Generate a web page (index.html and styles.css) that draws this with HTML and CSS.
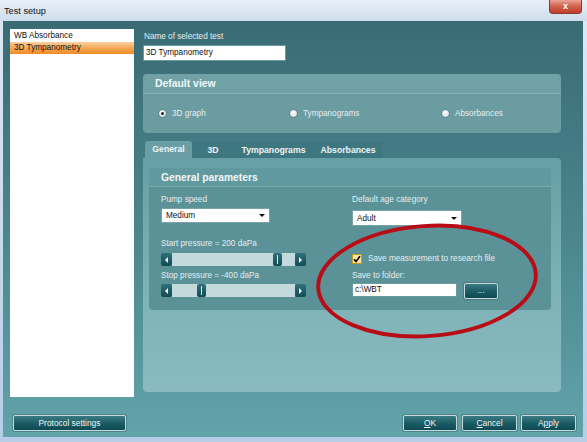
FILE: index.html
```html
<!DOCTYPE html>
<html>
<head>
<meta charset="utf-8">
<title>Test setup</title>
<link rel="stylesheet" href="styles.css">
</head>
<body>
<div class="window">
  <div class="titlebar">
    <span class="title">Test setup</span>
    <div class="close">x</div>
  </div>
  <div class="client">
    <div class="main">
      <div class="list">
        <div class="item">WB Absorbance</div>
        <div class="item selected">3D Tympanometry</div>
      </div>
      <div class="right">
        <div class="label name-label">Name of selected test</div>
        <div class="textbox name-box">3D Tympanometry</div>
        <div class="panel">
          <div class="panel-head">Default view</div>
          <div class="radios">
            <div class="radio-item"><span class="radio on"></span><span class="radio-text">3D graph</span></div>
            <div class="radio-item"><span class="radio"></span><span class="radio-text">Tympanograms</span></div>
            <div class="radio-item"><span class="radio"></span><span class="radio-text">Absorbances</span></div>
          </div>
        </div>
        <div class="tabs">
          <div class="tab active tab-general">General</div>
          <div class="tab-strip">
            <div class="tab tab-3d">3D</div>
            <div class="tab tab-tymp">Tympanograms</div>
            <div class="tab tab-abs">Absorbances</div>
          </div>
        </div>
        <div class="tabpanel">
          <div class="group">
            <div class="group-head">General parameters</div>
            <div class="group-body">
              <div class="col col-left">
                <div class="label lbl-pump">Pump speed</div>
                <div class="select sel-pump"><span>Medium</span><span class="caret"></span></div>
                <div class="label lbl-start">Start pressure = 200 daPa</div>
                <div class="slider sl-start">
                  <span class="sbtn"><span class="arr-l"></span></span>
                  <span class="track"><span class="thumb" style="left:101px"></span></span>
                  <span class="sbtn"><span class="arr-r"></span></span>
                </div>
                <div class="label lbl-stop">Stop pressure = -400 daPa</div>
                <div class="slider sl-stop">
                  <span class="sbtn"><span class="arr-l"></span></span>
                  <span class="track"><span class="thumb" style="left:25px"></span></span>
                  <span class="sbtn"><span class="arr-r"></span></span>
                </div>
              </div>
              <div class="col col-right">
                <div class="label lbl-age">Default age category</div>
                <div class="select sel-age"><span>Adult</span><span class="caret"></span></div>
                <div class="check-row">
                  <span class="checkbox">
                    <svg width="8" height="8" viewBox="0 0 8 8"><path d="M1 4.2 L3 6.4 L7 1.2" fill="none" stroke="#000" stroke-width="1.6"/></svg>
                  </span>
                  <span class="label">Save measurement to research file</span>
                </div>
                <div class="label lbl-folder">Save to folder:</div>
                <div class="folder-row">
                  <div class="textbox folder-box">c:\WBT</div>
                  <div class="btn btn-dots">...</div>
                </div>
              </div>
            </div>
          </div>
        </div>
      </div>
    </div>
    <div class="footer">
      <div class="btn btn-protocol">Protocol settings</div>
      <div class="footer-right">
        <div class="btn btn-ok"><u>O</u>K</div>
        <div class="btn btn-cancel"><u>C</u>ancel</div>
        <div class="btn btn-apply">A<u>p</u>ply</div>
      </div>
    </div>
  </div>
  <svg class="annotation" width="587" height="442" viewBox="0 0 587 442">
    <ellipse cx="427" cy="281" rx="109" ry="55" transform="rotate(-4 427 281)" fill="none" stroke="#b80d16" stroke-width="3.9"/>
  </svg>
</div>
</body>
</html>
```
FILE: styles.css
```css
html, body {
  margin: 0;
  padding: 0;
}
body {
  width: 587px;
  height: 442px;
  overflow: hidden;
  font-family: "Liberation Sans", Arial, sans-serif;
}
.window {
  position: relative;
  width: 587px;
  height: 442px;
  background: linear-gradient(#dfe9f5, #b6cce7);
}
.titlebar {
  height: 21px;
  display: flex;
  justify-content: space-between;
  align-items: flex-start;
  background: linear-gradient(#e9f0f8, #cfdced);
}
.title {
  font-size: 9.2px;
  line-height: 10px;
  margin: 6px 0 0 4px;
  color: #111;
}
.close {
  width: 33px;
  height: 14px;
  margin-right: 5px;
  box-sizing: border-box;
  background: linear-gradient(#eba596, #d26550 45%, #bf3e29);
  border: 1px solid #8a3b30;
  border-top: none;
  border-radius: 0 0 4px 4px;
  color: #fff;
  font-weight: bold;
  font-size: 9px;
  line-height: 12px;
  text-align: center;
}
.client {
  margin-left: 3px;
  width: 580px;
  height: 416px;
  box-sizing: border-box;
  padding: 8px 7px 0 7px;
  background: linear-gradient(#3a6b75, #4a858d 50%, #62a3aa);
}
.main {
  display: flex;
  gap: 9px;
  height: 368px;
}
.list {
  width: 124px;
  background: #fff;
  padding-top: 1px;
  box-sizing: border-box;
}
.item {
  font-size: 8.2px;
  line-height: 12px;
  height: 12px;
  padding-left: 4px;
  color: #111;
}
.item.selected {
  background: linear-gradient(#fbd0a0, #f6a452 55%, #f18b25);
}
.right {
  width: 418px;
  display: flex;
  flex-direction: column;
}
.label {
  font-size: 8.2px;
  line-height: 10px;
  color: #e4eef0;
  white-space: nowrap;
}
.name-label {
  margin-top: 3px;
  margin-left: 1px;
}
.textbox {
  background: #fff;
  box-sizing: border-box;
  border: 1px solid #6d9aa0;
  font-size: 8.2px;
  color: #111;
  padding-left: 2px;
}
.name-box {
  margin-top: 3px;
  width: 143px;
  height: 16px;
  line-height: 14px;
}
.panel {
  margin-top: 13px;
  height: 59px;
  border-radius: 4px;
  background: #6a9ca2;
  display: flex;
  flex-direction: column;
}
.panel-head {
  height: 20px;
  box-sizing: border-box;
  border-bottom: 1px solid #86b2b7;
  background: #6fa1a6;
  border-radius: 4px 4px 0 0;
  color: #f2f7f7;
  font-weight: bold;
  font-size: 10.4px;
  line-height: 20px;
  padding-left: 12px;
}
.radios {
  flex: 1;
  display: grid;
  grid-template-columns: 131px 152px auto;
  align-items: center;
  padding-left: 15px;
}
.radio-item {
  display: flex;
  align-items: center;
  gap: 5px;
}
.radio {
  width: 9px;
  height: 9px;
  box-sizing: border-box;
  border-radius: 50%;
  background: radial-gradient(circle at 40% 35%, #ffffff, #dfe6e8 70%, #b9c6ca);
  border: 1px solid #55868c;
  position: relative;
}
.radio.on::after {
  content: "";
  position: absolute;
  left: 2px;
  top: 2px;
  width: 3px;
  height: 3px;
  border-radius: 50%;
  background: #111;
}
.radio-text {
  font-size: 8.2px;
  color: #e6eff0;
}
.tabs {
  margin-top: 8px;
  height: 17px;
  display: flex;
  padding-left: 2px;
}
.tab {
  font-weight: bold;
  font-size: 8.7px;
  line-height: 17px;
  color: #eef5f5;
  text-align: center;
}
.tab.active {
  width: 47px;
  background: #6b9ea4;
  border-radius: 3px 3px 0 0;
}
.tab-strip {
  display: flex;
  background: #3e777f;
  height: 16px;
  margin-top: 1px;
}
.tab-strip .tab {
  line-height: 16px;
}
.tab-3d { width: 42px; }
.tab-tymp { width: 79px; }
.tab-abs { width: 70px; }
.tabpanel {
  height: 234px;
  box-sizing: border-box;
  background: linear-gradient(#669fa5, #7fb3b8 60%, #88babf);
  border-radius: 0 4px 4px 4px;
  padding: 10px 10px 0 6px;
}
.group {
  height: 142px;
  border-radius: 4px;
  background: #5b9298;
  display: flex;
  flex-direction: column;
}
.group-head {
  height: 19px;
  box-sizing: border-box;
  border-bottom: 1px solid #78abb0;
  background: #6199a0;
  border-radius: 4px 4px 0 0;
  color: #f2f7f7;
  font-weight: bold;
  font-size: 10.3px;
  line-height: 19px;
  padding-left: 12px;
}
.group-body {
  display: flex;
  padding-left: 12px;
}
.col {
  display: flex;
  flex-direction: column;
}
.col-left {
  width: 191px;
}
.lbl-pump, .lbl-age {
  margin-top: 8px;
}
.select {
  background: #fff;
  box-sizing: border-box;
  border: 1px solid #7aa3a8;
  display: flex;
  justify-content: space-between;
  align-items: center;
  font-size: 8.2px;
  color: #111;
  padding: 0 4px 0 4px;
}
.sel-pump {
  margin-top: 3px;
  width: 109px;
  height: 15px;
}
.sel-age {
  margin-top: 5px;
  width: 110px;
  height: 16px;
}
.caret {
  width: 0;
  height: 0;
  border-left: 3px solid transparent;
  border-right: 3px solid transparent;
  border-top: 3px solid #111;
}
.lbl-start {
  margin-top: 16px;
}
.slider {
  display: flex;
  width: 145px;
  height: 13px;
}
.sl-start {
  margin-top: 4px;
}
.lbl-stop {
  margin-top: 5px;
}
.sl-stop {
  margin-top: 3px;
}
.sbtn {
  width: 11px;
  height: 13px;
  background: linear-gradient(#2f7078, #124c55);
  border-radius: 2px;
  display: flex;
  align-items: center;
  justify-content: center;
}
.arr-l {
  width: 0;
  height: 0;
  border-top: 3px solid transparent;
  border-bottom: 3px solid transparent;
  border-right: 3px solid #fff;
}
.arr-r {
  width: 0;
  height: 0;
  border-top: 3px solid transparent;
  border-bottom: 3px solid transparent;
  border-left: 3px solid #fff;
}
.track {
  flex: 1;
  background: #c4d9dc;
  position: relative;
}
.thumb {
  position: absolute;
  top: 0;
  width: 9px;
  height: 13px;
  background: linear-gradient(#2f7078, #124c55);
  border-radius: 2px;
}
.thumb::after {
  content: "";
  position: absolute;
  left: 4px;
  top: 2px;
  width: 1px;
  height: 9px;
  background: #d8e8ea;
}
.check-row {
  margin-top: 28px;
  display: flex;
  align-items: center;
  gap: 6px;
  height: 10px;
}
.checkbox {
  width: 10px;
  height: 10px;
  box-sizing: border-box;
  border: 1px solid #c99a1c;
  background: #fbe7a0;
  display: flex;
  align-items: center;
  justify-content: center;
}
.lbl-folder {
  margin-top: 7px;
}
.folder-row {
  margin-top: 2px;
  display: flex;
  gap: 7px;
  align-items: flex-start;
}
.folder-box {
  width: 105px;
  height: 14px;
  line-height: 12px;
}
.btn {
  box-sizing: border-box;
  border: 1px solid #c9dadd;
  border-radius: 2px;
  background: linear-gradient(#3b7c84, #1d5d66 50%, #0e4a53);
  color: #eef5f6;
  font-size: 8.4px;
  text-align: center;
  height: 16px;
  line-height: 14px;
  box-shadow: 0 0 0 1px rgba(40, 80, 85, 0.35);
}
.btn-dots {
  width: 34px;
  line-height: 12px;
}
.footer {
  margin-top: 18px;
  display: flex;
  justify-content: space-between;
  padding-left: 3px;
}
.btn-protocol {
  width: 113px;
}
.footer-right {
  display: flex;
}
.btn-ok {
  width: 54px;
}
.btn-cancel {
  width: 55px;
  margin-left: 5px;
}
.btn-apply {
  width: 55px;
  margin-left: 4px;
}
.btn u {
  text-decoration: underline;
}
.annotation {
  position: absolute;
  left: 0;
  top: 0;
  pointer-events: none;
}
```
